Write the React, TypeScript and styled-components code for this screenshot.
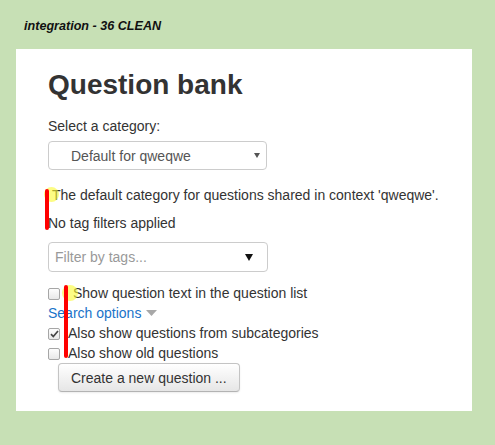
import React from "react";
import styled, { createGlobalStyle } from "styled-components";

const Global = createGlobalStyle`
  html, body { margin: 0; padding: 0; }
  body {
    background: #c7e0b5;
    font-family: "Liberation Sans", Arial, sans-serif;
    font-size: 14px;
    line-height: 20px;
    color: #333;
  }
`;

const Header = styled.div`
  height: 49px;
  box-sizing: border-box;
  padding: 18px 0 0 24px;
`;

const SiteTitle = styled.div`
  font-family: "Liberation Sans", Arial, sans-serif;
  font-weight: bold;
  font-style: italic;
  font-size: 12.6px;
  line-height: 16px;
  color: #111;
`;

const Panel = styled.div`
  position: relative;
  width: 456px;
  margin-left: 16px;
  box-sizing: border-box;
  padding: 20px 32px 19px 32px;
  background: #fff;
  display: flex;
  flex-direction: column;
  align-items: flex-start;
`;

const Heading = styled.h2`
  margin: 0;
  font-size: 28px;
  line-height: 31px;
  font-weight: bold;
  color: #333;
`;

const Text = styled.div<{ $mt: number; $indent?: number }>`
  margin-top: ${(p) => p.$mt}px;
  padding-left: ${(p) => p.$indent ?? 0}px;
  line-height: 20px;
`;

const Field = styled.div<{ $mt: number; $w: number; $h: number }>`
  margin-top: ${(p) => p.$mt}px;
  width: ${(p) => p.$w}px;
  height: ${(p) => p.$h}px;
  box-sizing: border-box;
  border: 1px solid #ccc;
  border-radius: 4px;
  background: #fff;
  display: flex;
  align-items: center;
  justify-content: space-between;
`;

const SelectText = styled.span`
  padding-left: 22px;
  color: #555;
`;

const Placeholder = styled.span`
  padding-left: 6px;
  color: #999;
`;

const Arrow = styled.svg<{ $mr: number }>`
  margin-right: ${(p) => p.$mr}px;
  display: block;
`;

const CheckRow = styled.label<{ $mt?: number; $gap: number }>`
  margin-top: ${(p) => p.$mt ?? 0}px;
  display: flex;
  align-items: center;
  gap: ${(p) => p.$gap}px;
  height: 20px;
`;

const Box = styled.span`
  width: 12px;
  height: 12px;
  box-sizing: border-box;
  border: 1px solid #a6a6a6;
  border-radius: 2px;
  background: linear-gradient(#fdfdfd, #e8e8e8);
  display: flex;
  align-items: center;
  justify-content: center;
  margin-top: 1px;
`;

const SearchLink = styled.a`
  display: flex;
  align-items: center;
  gap: 5px;
  height: 20px;
  color: #1a73c9;
  text-decoration: none;
`;

const Button = styled.button`
  margin: 0 0 0 10px;
  height: 29px;
  box-sizing: border-box;
  padding: 0 12px;
  white-space: nowrap;
  font-family: "Liberation Sans", Arial, sans-serif;
  font-size: 14px;
  color: #333;
  border: 1px solid #c4c4c4;
  border-bottom-color: #b3b3b3;
  border-radius: 4px;
  background: linear-gradient(#ffffff, #e6e6e6);
  box-shadow: 0 1px 2px rgba(0, 0, 0, 0.08);
`;

const Spot = styled.span<{ $x: number; $y: number; $d: number }>`
  position: absolute;
  left: ${(p) => p.$x}px;
  top: ${(p) => p.$y}px;
  width: ${(p) => p.$d}px;
  height: ${(p) => p.$d}px;
  border-radius: 50%;
  background: rgba(250, 250, 50, 0.6);
  pointer-events: none;
`;

const Marker = styled.span<{ $x: number; $y: number; $h: number }>`
  position: absolute;
  left: ${(p) => p.$x}px;
  top: ${(p) => p.$y}px;
  width: 4px;
  height: ${(p) => p.$h}px;
  border-radius: 2px;
  background: #ff0000;
  pointer-events: none;
`;

const Check = () => (
  <svg width="9" height="8" viewBox="0 0 9 8">
    <path d="M1 4.2 L3.3 6.6 L8 1" fill="none" stroke="#444" strokeWidth="1.7" />
  </svg>
);

export default function App() {
  return (
    <>
      <Global />
      <Header>
        <SiteTitle>integration - 36 CLEAN</SiteTitle>
      </Header>
      <Panel>
        <Heading>Question bank</Heading>
        <Text $mt={16}>Select a category:</Text>
        <Field $mt={5} $w={219} $h={29}>
          <SelectText>Default for qweqwe</SelectText>
          <Arrow $mr={6} width="6" height="5" viewBox="0 0 6 5">
            <path d="M0 0 H6 L3 5 Z" fill="#555" />
          </Arrow>
        </Field>
        <Text $mt={15} $indent={4}>
          The default category for questions shared in context 'qweqwe'.
        </Text>
        <Text $mt={8}>No tag filters applied</Text>
        <Field $mt={9} $w={220} $h={30}>
          <Placeholder>Filter by tags...</Placeholder>
          <Arrow $mr={14} width="8" height="7" viewBox="0 0 8 7">
            <path d="M0 0 H8 L4 7 Z" fill="#111" />
          </Arrow>
        </Field>
        <CheckRow $mt={11} $gap={13}>
          <Box />
          Show question text in the question list
        </CheckRow>
        <SearchLink href="#">
          Search options
          <svg width="11" height="6" viewBox="0 0 11 6">
            <path d="M0 0 H11 L5.5 6 Z" fill="#a8a8a8" />
          </svg>
        </SearchLink>
        <CheckRow $gap={8}>
          <Box>
            <Check />
          </Box>
          Also show questions from subcategories
        </CheckRow>
        <CheckRow $gap={8}>
          <Box />
          Also show old questions
        </CheckRow>
        <Button>Create a new question ...</Button>

        <Spot $x={28} $y={138} $d={15} />
        <Marker $x={29} $y={140} $h={41} />
        <Spot $x={46} $y={236} $d={16} />
        <Marker $x={48} $y={236} $h={73} />
      </Panel>
    </>
  );
}
